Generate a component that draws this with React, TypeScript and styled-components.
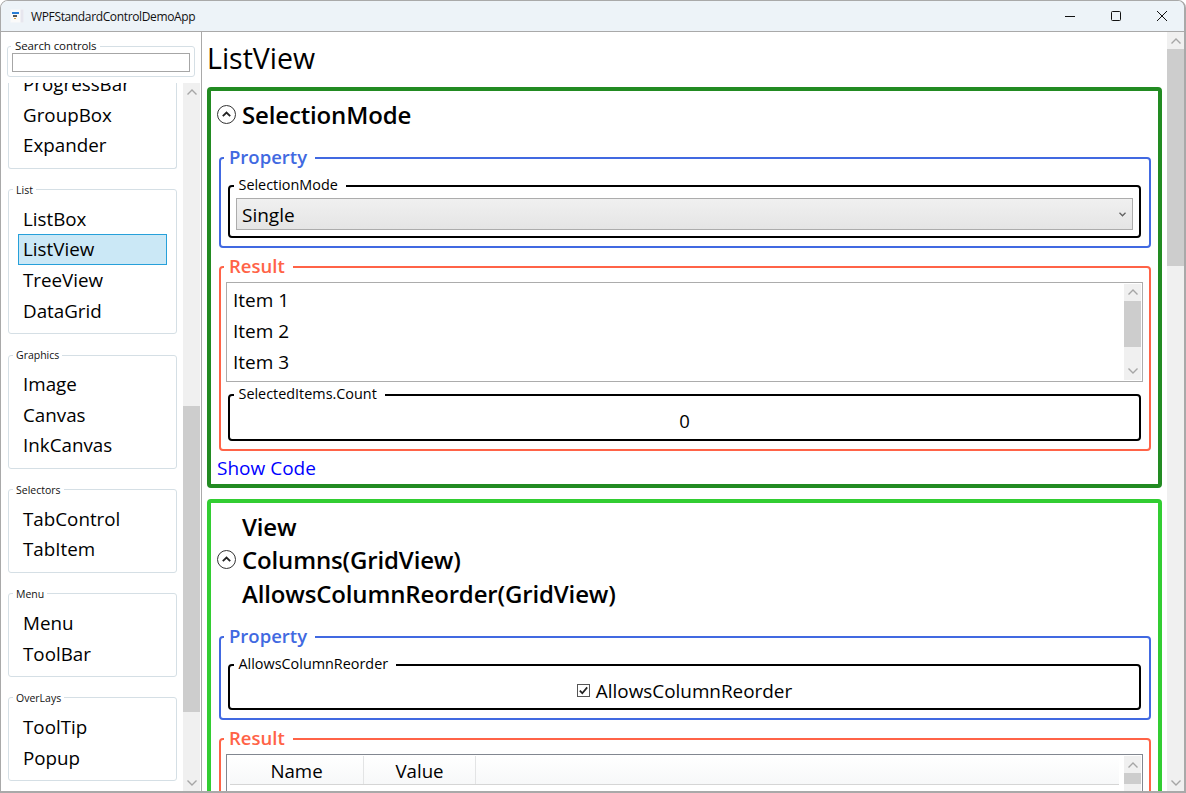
import React from 'react'
import styled, { createGlobalStyle } from 'styled-components'

const FONT = `"Open Sans", "Noto Sans", "Liberation Sans", sans-serif`

const GlobalStyle = createGlobalStyle`
    html, body {
        margin: 0;
        padding: 0;
        background: #fff;
        overflow: hidden;
    }
    * {
        box-sizing: border-box;
    }
`

// --- small drawings ---

const Chevron: React.FC<{ up?: boolean }> = ({ up }) => (
    <svg width="12" height="8" viewBox="0 0 12 8" fill="none">
        <path d={up ? 'M1.5 6.5 L6 2 L10.5 6.5' : 'M1.5 1.5 L6 6 L10.5 1.5'} stroke="#a6a6a6" strokeWidth="1.4" />
    </svg>
)

const ComboChevron = () => (
    <svg width="7" height="5" viewBox="0 0 7 5" fill="none">
        <path d="M0.5 0.8 L3.5 3.8 L6.5 0.8" stroke="#606060" strokeWidth="1.3" />
    </svg>
)

const ExpanderIcon = () => (
    <svg width="19" height="19" viewBox="0 0 19 19" fill="none">
        <circle cx="9.5" cy="9.5" r="9" stroke="#333" strokeWidth="1" />
        <path d="M5.8 11.2 L9.5 7.5 L13.2 11.2" stroke="#222" strokeWidth="1.8" />
    </svg>
)

const AppIcon = () => (
    <svg width="14" height="14" viewBox="0 0 14 14" fill="none">
        <rect x="0.5" y="0.5" width="13" height="13" fill="#fafafa" />
        <rect x="10.5" y="0.5" width="3" height="13" fill="#e6e6ee" />
        <rect x="2" y="3" width="7" height="2" fill="#2b7fd6" />
        <rect x="3" y="6" width="4" height="2" fill="#555" />
        <rect x="4" y="9" width="2" height="1" fill="#e0a030" />
    </svg>
)

const MinimizeIcon = () => (
    <svg width="10" height="10" viewBox="0 0 10 10" fill="none">
        <path d="M0 5.5 H10" stroke="#111" strokeWidth="1" />
    </svg>
)

const MaximizeIcon = () => (
    <svg width="10" height="10" viewBox="0 0 10 10" fill="none">
        <rect x="0.5" y="0.5" width="9" height="9" rx="1" stroke="#111" strokeWidth="1" />
    </svg>
)

const CloseIcon = () => (
    <svg width="10" height="10" viewBox="0 0 10 10" fill="none">
        <path d="M0 0 L10 10 M10 0 L0 10" stroke="#111" strokeWidth="1" />
    </svg>
)

const CheckMark = () => (
    <svg width="13" height="13" viewBox="0 0 13 13" fill="none">
        <rect x="0.5" y="0.5" width="12" height="12" stroke="#555" fill="#fff" />
        <path d="M2.8 6.6 L5.3 9.2 L10.2 3.4" stroke="#222" strokeWidth="1.7" />
    </svg>
)

// --- scrollbar ---

interface IScrollBarProps {
    before?: number
    thumb: number
}

const ScrollBar: React.FC<IScrollBarProps> = ({ before = 0, thumb }) => (
    <Rail>
        <RailButton><Chevron up /></RailButton>
        <RailGap $size={before} />
        <RailThumb $size={thumb} />
        <RailRest />
        <RailButton><Chevron /></RailButton>
    </Rail>
)

// --- window ---

const sideGroups = [
    { title: 'List', items: ['ListBox', 'ListView', 'TreeView', 'DataGrid'] },
    { title: 'Graphics', items: ['Image', 'Canvas', 'InkCanvas'] },
    { title: 'Selectors', items: ['TabControl', 'TabItem'] },
    { title: 'Menu', items: ['Menu', 'ToolBar'] },
    { title: 'OverLays', items: ['ToolTip', 'Popup'] },
]

const App: React.FC = () => {
    return (
        <Window>
            <GlobalStyle />
            <TitleBar>
                <AppIconBox><AppIcon /></AppIconBox>
                <TitleText>WPFStandardControlDemoApp</TitleText>
                <WindowButtons>
                    <WindowButton><MinimizeIcon /></WindowButton>
                    <WindowButton><MaximizeIcon /></WindowButton>
                    <WindowButton><CloseIcon /></WindowButton>
                </WindowButtons>
            </TitleBar>

            <Body>
                <Sidebar>
                    <SearchGroup>
                        <SearchLegend>Search controls</SearchLegend>
                        <SearchInput />
                    </SearchGroup>
                    <SideScrollArea>
                        <SideList>
                            {/* the first group is scrolled half out of view */}
                            <ClippedGroup>
                                <SideItem>ProgressBar</SideItem>
                                <SideItem>GroupBox</SideItem>
                                <SideItem>Expander</SideItem>
                            </ClippedGroup>
                            {sideGroups.map((group) => (
                                <SideGroup key={group.title}>
                                    <SideLegend>{group.title}</SideLegend>
                                    {group.items.map((item) => (
                                        <SideItem key={item} $selected={item === 'ListView'}>{item}</SideItem>
                                    ))}
                                </SideGroup>
                            ))}
                        </SideList>
                        <ScrollBar before={306} thumb={306} />
                    </SideScrollArea>
                </Sidebar>

                <Main>
                    <MainContent>
                        <PageTitle>ListView</PageTitle>

                        <Card $color="#228b22">
                            <ExpanderHeader $gap={14}>
                                <ExpanderIcon />
                                <HeaderLines>
                                    <HeaderLine>SelectionMode</HeaderLine>
                                </HeaderLines>
                            </ExpanderHeader>

                            <Section $color="#4169e1">
                                <SectionLegend $color="#4169e1">Property</SectionLegend>
                                <Inner>
                                    <InnerLegend>SelectionMode</InnerLegend>
                                    <ComboBox>
                                        <span>Single</span>
                                        <ComboChevron />
                                    </ComboBox>
                                </Inner>
                            </Section>

                            <Section $color="#ff6347">
                                <SectionLegend $color="#ff6347">Result</SectionLegend>
                                <ListBox>
                                    <ListRows>
                                        <ListRow>Item 1</ListRow>
                                        <ListRow>Item 2</ListRow>
                                        <ListRow>Item 3</ListRow>
                                    </ListRows>
                                    <ScrollBar thumb={46} />
                                </ListBox>
                                <CountGroup>
                                    <InnerLegend>SelectedItems.Count</InnerLegend>
                                    <CenterValue>0</CenterValue>
                                </CountGroup>
                            </Section>

                            <ShowCode>Show Code</ShowCode>
                        </Card>

                        <Card $color="#32cd32">
                            <ExpanderHeader $gap={15}>
                                <ExpanderIcon />
                                <HeaderLines>
                                    <HeaderLine>View</HeaderLine>
                                    <HeaderLine>Columns(GridView)</HeaderLine>
                                    <HeaderLine>AllowsColumnReorder(GridView)</HeaderLine>
                                </HeaderLines>
                            </ExpanderHeader>

                            <Section $color="#4169e1">
                                <SectionLegend $color="#4169e1">Property</SectionLegend>
                                <Inner>
                                    <InnerLegend>AllowsColumnReorder</InnerLegend>
                                    <CheckRow>
                                        <CheckMark />
                                        <span>AllowsColumnReorder</span>
                                    </CheckRow>
                                </Inner>
                            </Section>

                            <Section $color="#ff6347">
                                <SectionLegend $color="#ff6347">Result</SectionLegend>
                                <GridList>
                                    <GridHeaderArea>
                                        <GridHeader>
                                            <NameColumn>Name</NameColumn>
                                            <ValueColumn>Value</ValueColumn>
                                        </GridHeader>
                                    </GridHeaderArea>
                                    <ScrollBar thumb={11} />
                                </GridList>
                            </Section>
                        </Card>
                    </MainContent>
                    <ScrollBar thumb={217} />
                </Main>
            </Body>
        </Window>
    )
}

const Window = styled.div`
    width: 1186px;
    height: 793px;
    display: flex;
    flex-direction: column;
    overflow: hidden;
    background: #fff;
    border: solid #a9a9a9;
    border-width: 1px 2px 2px 1px;
    border-radius: 8px 8px 0 0;
    font-family: ${FONT};
    color: #000;
`

const TitleBar = styled.div`
    height: 30px;
    flex: none;
    display: flex;
    align-items: center;
    background: #edf3f8;
`

const AppIconBox = styled.div`
    width: 30px;
    padding-left: 9px;
    display: flex;
`

const TitleText = styled.div`
    font-size: 12px;
    letter-spacing: -0.36px;
    color: #111;
    flex: 1;
`

const WindowButtons = styled.div`
    display: flex;
    height: 100%;
    margin-right: -1px;
`

const WindowButton = styled.div`
    width: 46px;
    display: flex;
    align-items: center;
    justify-content: center;
`

const Body = styled.div`
    flex: 1;
    min-height: 0;
    display: flex;
    border-top: 1px solid #a9a9a9;
`

const Sidebar = styled.aside`
    width: 200px;
    flex: none;
    display: flex;
    flex-direction: column;
    padding: 7px 1px 0 0;
`

const SearchGroup = styled.fieldset`
    margin: 0 5px 0 6px;
    padding: 0 4px 4px 4px;
    height: 38px;
    flex: none;
    border: 1px solid #d5dfe5;
    border-radius: 3px;
`

const SearchLegend = styled.legend`
    margin-left: -1px;
    padding: 0 4px;
    font-size: 11.5px;
    line-height: 14px;
    letter-spacing: -0.1px;
    color: #111;
`

const SearchInput = styled.div`
    height: 19px;
    border: 1.5px solid #a6a6a6;
    background: #fff;
`

const SideScrollArea = styled.div`
    flex: 1;
    min-height: 0;
    margin-top: 6px;
    display: flex;
`

const SideList = styled.div`
    flex: 1;
    min-width: 0;
    overflow: hidden;
    padding: 0 6px 0 7px;
`

const ClippedGroup = styled.div`
    margin-top: -14px;
    padding: 0 9px 7px 9px;
    border: 1px solid #d5dfe5;
    border-top: none;
    border-radius: 0 0 3px 3px;
`

const SideGroup = styled.fieldset`
    margin: 12.75px 0 0 0;
    padding: 6px 9px 7px 9px;
    border: 1px solid #d5dfe5;
    border-radius: 3px;
`

const SideLegend = styled.legend`
    margin-left: -5px;
    padding: 0 3px;
    font-size: 10.5px;
    line-height: 16px;
    color: #111;
`

const SideItem = styled.div<{ $selected?: boolean }>`
    height: 30.67px;
    line-height: 28.67px;
    padding-left: 4px;
    font-size: 18.8px;
    white-space: nowrap;
    border: 1px solid ${(p) => (p.$selected ? '#26a0da' : 'transparent')};
    background: ${(p) => (p.$selected ? '#cbe8f6' : 'transparent')};
`

const Rail = styled.div`
    width: 17px;
    flex: none;
    display: flex;
    flex-direction: column;
    background: #f0f0f0;
`

const RailButton = styled.div`
    height: 17px;
    flex: none;
    display: flex;
    align-items: center;
    justify-content: center;
`

const RailGap = styled.div<{ $size: number }>`
    height: ${(p) => p.$size}px;
    flex: none;
`

const RailThumb = styled.div<{ $size: number }>`
    height: ${(p) => p.$size}px;
    flex: none;
    background: #cdcdcd;
`

const RailRest = styled.div`
    flex: 1;
`

const Main = styled.main`
    flex: 1;
    min-width: 0;
    display: flex;
    border-left: 1px solid #a9a9a9;
`

const MainContent = styled.div`
    flex: 1;
    min-width: 0;
    overflow: hidden;
    padding: 8px 5px 0 5px;
`

const PageTitle = styled.h1`
    margin: 0 0 10px 0;
    font-size: 28.5px;
    line-height: 37px;
    font-weight: 400;
`

const Card = styled.section<{ $color: string }>`
    border: 4px solid ${(p) => p.$color};
    border-radius: 4px;
    padding: 7px 7px 2.5px 6px;
    margin-bottom: 10.5px;
`

const ExpanderHeader = styled.div<{ $gap: number }>`
    display: flex;
    align-items: center;
    gap: 6px;
    margin-bottom: ${(p) => p.$gap}px;
`

const HeaderLines = styled.div`
    display: flex;
    flex-direction: column;
`

const HeaderLine = styled.div`
    font-size: 24px;
    line-height: 33.5px;
    font-weight: 600;
    letter-spacing: -0.15px;
    white-space: nowrap;
`

const Section = styled.fieldset<{ $color: string }>`
    margin: 0 0 7px 2px;
    padding: 6px 8px 8px 7px;
    min-width: 0;
    border: 2px solid ${(p) => p.$color};
    border-radius: 4px;
`

const SectionLegend = styled.legend<{ $color: string }>`
    margin-left: -4px;
    padding: 0 8px 2px 5px;
    font-size: 18.5px;
    line-height: 22px;
    font-weight: 600;
    color: ${(p) => p.$color};
`

const Inner = styled.fieldset`
    margin: 0;
    padding: 2px 6px 6px 6px;
    min-width: 0;
    border: 2.5px solid #000;
    border-radius: 4px;
`

const InnerLegend = styled.legend`
    margin-left: -2px;
    padding: 0 8px 2px 4.5px;
    font-size: 14.4px;
    line-height: 18px;
`

const ComboBox = styled.div`
    height: 32px;
    padding: 2px 6px 0 5px;
    display: flex;
    align-items: center;
    justify-content: space-between;
    font-size: 19px;
    background: linear-gradient(#f0f0f0, #e5e5e5);
    border: 1px solid #acacac;
`

const ListBox = styled.div`
    height: 100px;
    margin: -3px -2px 0 -2px;
    padding: 1px;
    display: flex;
    border: 1px solid #acacac;
`

const ListRows = styled.div`
    flex: 1;
    min-width: 0;
    padding: 1px 0 0 5px;
`

const ListRow = styled.div`
    height: 31px;
    line-height: 31px;
    font-size: 19px;
`

const CountGroup = styled.fieldset`
    margin: 3px 0 0 0;
    padding: 0 6px;
    min-width: 0;
    height: 56px;
    border: 2.5px solid #000;
    border-radius: 4px;
`

const CenterValue = styled.div`
    text-align: center;
    font-size: 18.5px;
    line-height: 32px;
`

const ShowCode = styled.div`
    margin-top: -3px;
    font-size: 19px;
    line-height: 27px;
    color: #0000ff;
`

const CheckRow = styled.div`
    height: 27px;
    margin-bottom: -2px;
    display: flex;
    align-items: center;
    justify-content: center;
    gap: 6px;
    font-size: 18.9px;
`

const GridList = styled.div`
    height: 100px;
    margin: -3px -2px 0 -2px;
    padding: 1px;
    display: flex;
    border: 1px solid #828790;
`

const GridHeaderArea = styled.div`
    flex: 1;
    min-width: 0;
    padding: 0 5px 0 2px;
`

const GridHeader = styled.div`
    height: 29px;
    display: flex;
    border-bottom: 1px solid #d5d5d5;
    background: linear-gradient(#fff, #f7f8f9);
    font-size: 18.7px;
    line-height: 30px;
    text-align: center;
`

const NameColumn = styled.div`
    width: 134px;
    border-right: 1px solid #e3e4e5;
`

const ValueColumn = styled.div`
    width: 112px;
    border-right: 1px solid #e3e4e5;
`

export default App
